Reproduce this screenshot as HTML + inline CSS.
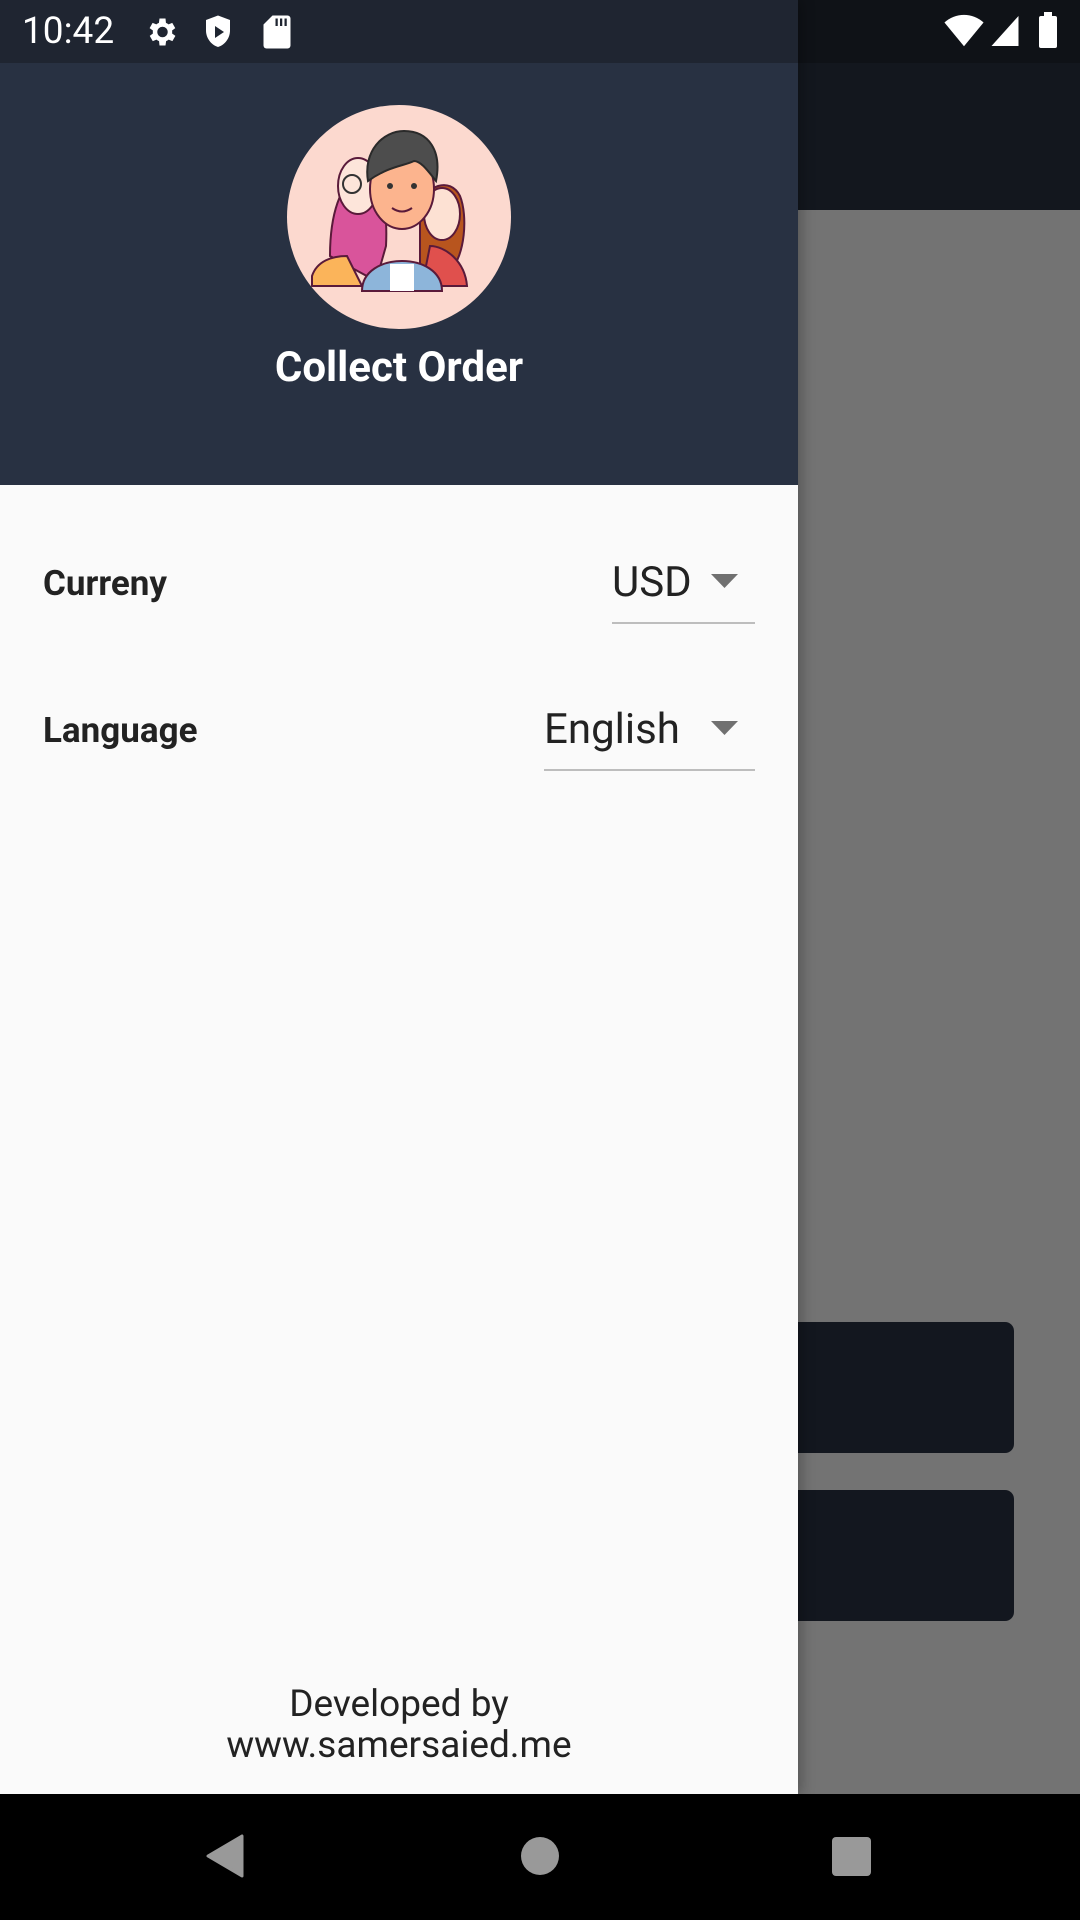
<!DOCTYPE html>
<html><head><meta charset="utf-8">
<style>
*{margin:0;padding:0;box-sizing:border-box}
body{width:1080px;height:1920px;overflow:hidden;position:relative;background:#737373;font-family:"Roboto","Liberation Sans",sans-serif}
.abs{position:absolute}
</style></head><body>
<div class="abs" style="left:798px;top:0;width:282px;height:63px;background:#0f1217"></div>
<div class="abs" style="left:798px;top:63px;width:282px;height:147px;background:#13171e"></div>
<div class="abs" style="left:770px;top:1322px;width:244px;height:131px;background:#13171f;border-radius:9px"></div>
<div class="abs" style="left:770px;top:1490px;width:244px;height:131px;background:#13171f;border-radius:9px"></div>
<div class="abs" style="left:0;top:0;width:798px;height:1794px;background:#fafafa;box-shadow:4px 0 12px rgba(0,0,0,.25)"></div>
<div class="abs" style="left:0;top:0;width:798px;height:63px;background:#1f2531"></div>
<div class="abs" style="left:0;top:63px;width:798px;height:422px;background:#283142"></div>
<div class="abs" style="left:22px;top:10px;color:#fff;font-size:37px;line-height:44px">10:42</div>
<svg class="abs" style="left:143px;top:14px" width="36" height="36" viewBox="0 0 24 24"><path fill="#fff" d="M19.4 13a7.5 7.5 0 0 0 0-2l2.1-1.6-2-3.5-2.5 1a7 7 0 0 0-1.7-1L15 3h-4l-.4 2.9a7 7 0 0 0-1.7 1l-2.5-1-2 3.5L6.6 11a7.5 7.5 0 0 0 0 2l-2.1 1.6 2 3.5 2.5-1a7 7 0 0 0 1.7 1L11 21h4l.4-2.9a7 7 0 0 0 1.7-1l2.5 1 2-3.5zM13 15.5a3.5 3.5 0 1 1 0-7 3.5 3.5 0 0 1 0 7z"/></svg>
<svg class="abs" style="left:202px;top:14px" width="32" height="36" viewBox="0 0 20 24"><path fill="#fff" d="M10 1 2 4v7c0 5 3.4 9.6 8 11 4.6-1.4 8-6 8-11V4z"/><path fill="#1f2531" d="M8 8v8l6-4z"/></svg>
<svg class="abs" style="left:262px;top:14px" width="30" height="36" viewBox="0 0 20 24"><path fill="#fff" d="M7 1h10a2 2 0 0 1 2 2v18a2 2 0 0 1-2 2H3a2 2 0 0 1-2-2V7z"/><path fill="#1f2531" d="M9 3h1.5v5H9zM12 3h1.5v5H12zM15 3h1.5v5H15z"/></svg>
<svg class="abs" style="left:943px;top:14px" width="42" height="34" viewBox="0 0 24 20"><path fill="#fff" d="M12 19 .5 5a17 17 0 0 1 23 0z"/></svg>
<svg class="abs" style="left:990px;top:14px" width="30" height="34" viewBox="0 0 20 22"><path fill="#fff" d="M19 1v20H1z"/></svg>
<div class="abs" style="left:1039px;top:16px;width:18px;height:32px;background:#fff;border-radius:2px"></div>
<div class="abs" style="left:1044px;top:12px;width:8px;height:5px;background:#fff"></div>
<div class="abs" style="left:287px;top:105px;width:224px;height:224px;border-radius:50%;background:#fcd9cf;overflow:hidden">
 <svg width="224" height="224" viewBox="0 0 224 224">
 <g transform="translate(3 -19)">
  <path d="M40 170c0-40 10-75 30-80 20-3 28 30 26 70l-10 35z" fill="#d9549b" stroke="#5a1a3a" stroke-width="2"/>
  <ellipse cx="68" cy="100" rx="20" ry="28" fill="#fde5da" stroke="#5a1a3a" stroke-width="2"/>
  <circle cx="62" cy="98" r="9" fill="none" stroke="#333" stroke-width="2"/>
  <path d="M22 190c5-15 20-20 35-20l15 30H22z" fill="#fbb45a" stroke="#5a1a3a" stroke-width="2"/>
  <path d="M130 120c5-20 30-30 40-10 8 20 5 60-10 75l-30 5z" fill="#b8551e" stroke="#5a1a3a" stroke-width="2"/>
  <ellipse cx="152" cy="128" rx="18" ry="26" fill="#fde1d3" stroke="#5a1a3a" stroke-width="2"/>
  <path d="M140 160c15 0 35 15 37 40l-45 0z" fill="#e0504d" stroke="#5a1a3a" stroke-width="2"/>
  <path d="M72 205c0-20 20-30 40-30s40 10 40 30z" fill="#8db5da" stroke="#5a1a3a" stroke-width="2"/>
  <path d="M100 178h24v27h-24z" fill="#fff"/>
  <ellipse cx="112" cy="103" rx="32" ry="40" fill="#fcb48e" stroke="#5a1a3a" stroke-width="2"/>
  <path d="M78 95c-5-30 15-50 36-50 25 0 38 20 32 50-8-10-15-20-22-20-10 5-25 5-46 20z" fill="#4d4d4d" stroke="#2a2a2a" stroke-width="2"/>
  <circle cx="100" cy="100" r="3" fill="#333"/><circle cx="124" cy="100" r="3" fill="#333"/>
  <path d="M102 122q10 7 20 0" fill="none" stroke="#5a1a3a" stroke-width="2"/>
 </g>
 </svg>
</div>
<div class="abs" style="left:0;top:343px;width:798px;text-align:center;color:#fff;font-weight:bold;font-size:42px;line-height:50px">Collect Order</div>
<div class="abs" style="left:43px;top:563px;font-size:35px;font-weight:bold;color:#222;line-height:42px">Curreny</div>
<div class="abs" style="left:612px;top:558px;font-size:42px;color:#222;line-height:50px">USD</div>
<svg class="abs" style="left:711px;top:574px" width="27" height="14"><path d="M0 0h27L13.5 14z" fill="#707070"/></svg>
<div class="abs" style="left:612px;top:622px;width:143px;height:1.5px;background:#bdbdbd"></div>
<div class="abs" style="left:43px;top:710px;font-size:35px;font-weight:bold;color:#222;line-height:42px">Language</div>
<div class="abs" style="left:544px;top:705px;font-size:42px;color:#222;line-height:50px">English</div>
<svg class="abs" style="left:711px;top:721px" width="27" height="14"><path d="M0 0h27L13.5 14z" fill="#707070"/></svg>
<div class="abs" style="left:544px;top:769px;width:211px;height:1.5px;background:#bdbdbd"></div>
<div class="abs" style="left:0;top:1684px;width:798px;text-align:center;font-size:37px;line-height:41px;color:#222">Developed by<br>www.samersaied.me</div>
<div class="abs" style="left:0;top:1794px;width:1080px;height:126px;background:#000"></div>
<svg class="abs" style="left:206px;top:1834px" width="38" height="44"><path d="M36 2v40L2 22z" fill="#999" stroke="#999" stroke-width="3" stroke-linejoin="round"/></svg>
<div class="abs" style="left:521px;top:1837px;width:38px;height:38px;border-radius:50%;background:#999"></div>
<div class="abs" style="left:832px;top:1837px;width:39px;height:39px;border-radius:4px;background:#999"></div>
</body></html>
